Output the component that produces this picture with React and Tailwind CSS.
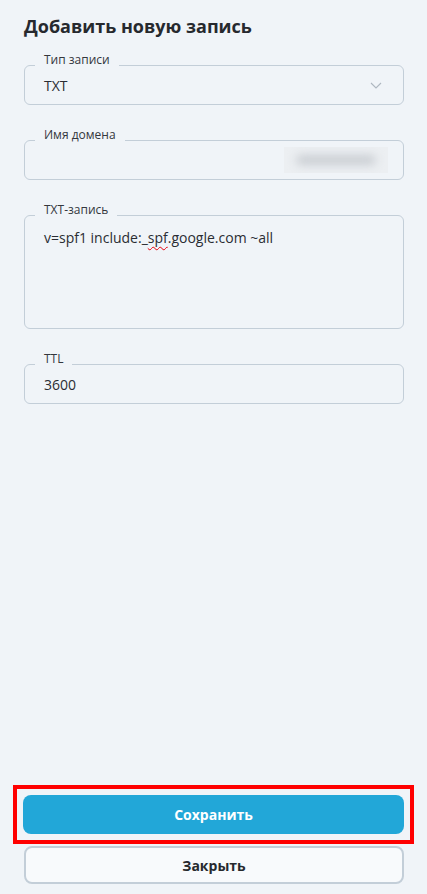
import React from 'react'

function Field({ label, children, className = '' }) {
  return (
    <div className={`relative rounded-md border border-[#c3ced8] ${className}`}>
      <span className="absolute -top-[14px] left-[10px] bg-[#f0f4f8] px-[9px] text-[12px] leading-4 text-[#34373d]">
        {label}
      </span>
      {children}
    </div>
  )
}

export default function App() {
  return (
    <div
      className="flex min-h-screen flex-col bg-[#f0f4f8] pl-6 pr-[23px] pt-[13px] pb-[10px] text-[#2a2d33]"
      style={{ fontFamily: '"Open Sans", "Noto Sans", sans-serif' }}
    >
      <h1 className="text-[18px] font-bold leading-[26px] text-[#26292e]">Добавить новую запись</h1>

      <div className="mt-[26px] flex flex-col gap-[35px]">
        <Field label="Тип записи">
          <div className="flex h-[38px] items-center justify-between pl-[19px] pr-[21px] text-[14px]">
            <span>TXT</span>
            <svg width="12" height="7" viewBox="0 0 12 7" fill="none" stroke="#aeb7c0" strokeWidth="1.1">
              <path d="M1 1l5 5 5-5" />
            </svg>
          </div>
        </Field>

        <Field label="Имя домена">
          <div className="flex h-[38px] items-center justify-end pr-[15px]">
            <div className="flex h-[26px] w-[104px] items-center justify-center overflow-hidden bg-[#eceff2]">
              <div className="h-[10px] w-[80px] rounded-full bg-[#c9cdd2] blur-[5px]" />
            </div>
          </div>
        </Field>

        <Field label="TXT-запись">
          <div className="h-[112px] pl-[19px] pt-[12px] text-[14px] leading-5">
            v=spf1 include:_
            <span className="underline decoration-red-600 decoration-wavy decoration-1 underline-offset-[3px]">spf</span>
            .google.com ~all
          </div>
        </Field>

        <Field label="TTL">
          <div className="flex h-[38px] items-center pl-[19px] text-[14px]">3600</div>
        </Field>
      </div>

      <div className="flex-1" />

      <div className="-ml-[11px] -mr-[10px] border-4 border-[#ff0000] p-[6px]">
        <button className="flex h-[39px] w-full items-center justify-center rounded-lg bg-[#22a7d8] text-[14px] font-bold text-white">
          Сохранить
        </button>
      </div>
      <button className="mt-[2px] flex h-[38px] w-full items-center justify-center rounded-lg border-2 border-[#c3ced8] bg-[#f8fafc] text-[14px] font-bold text-[#26292e]">
        Закрыть
      </button>
    </div>
  )
}
